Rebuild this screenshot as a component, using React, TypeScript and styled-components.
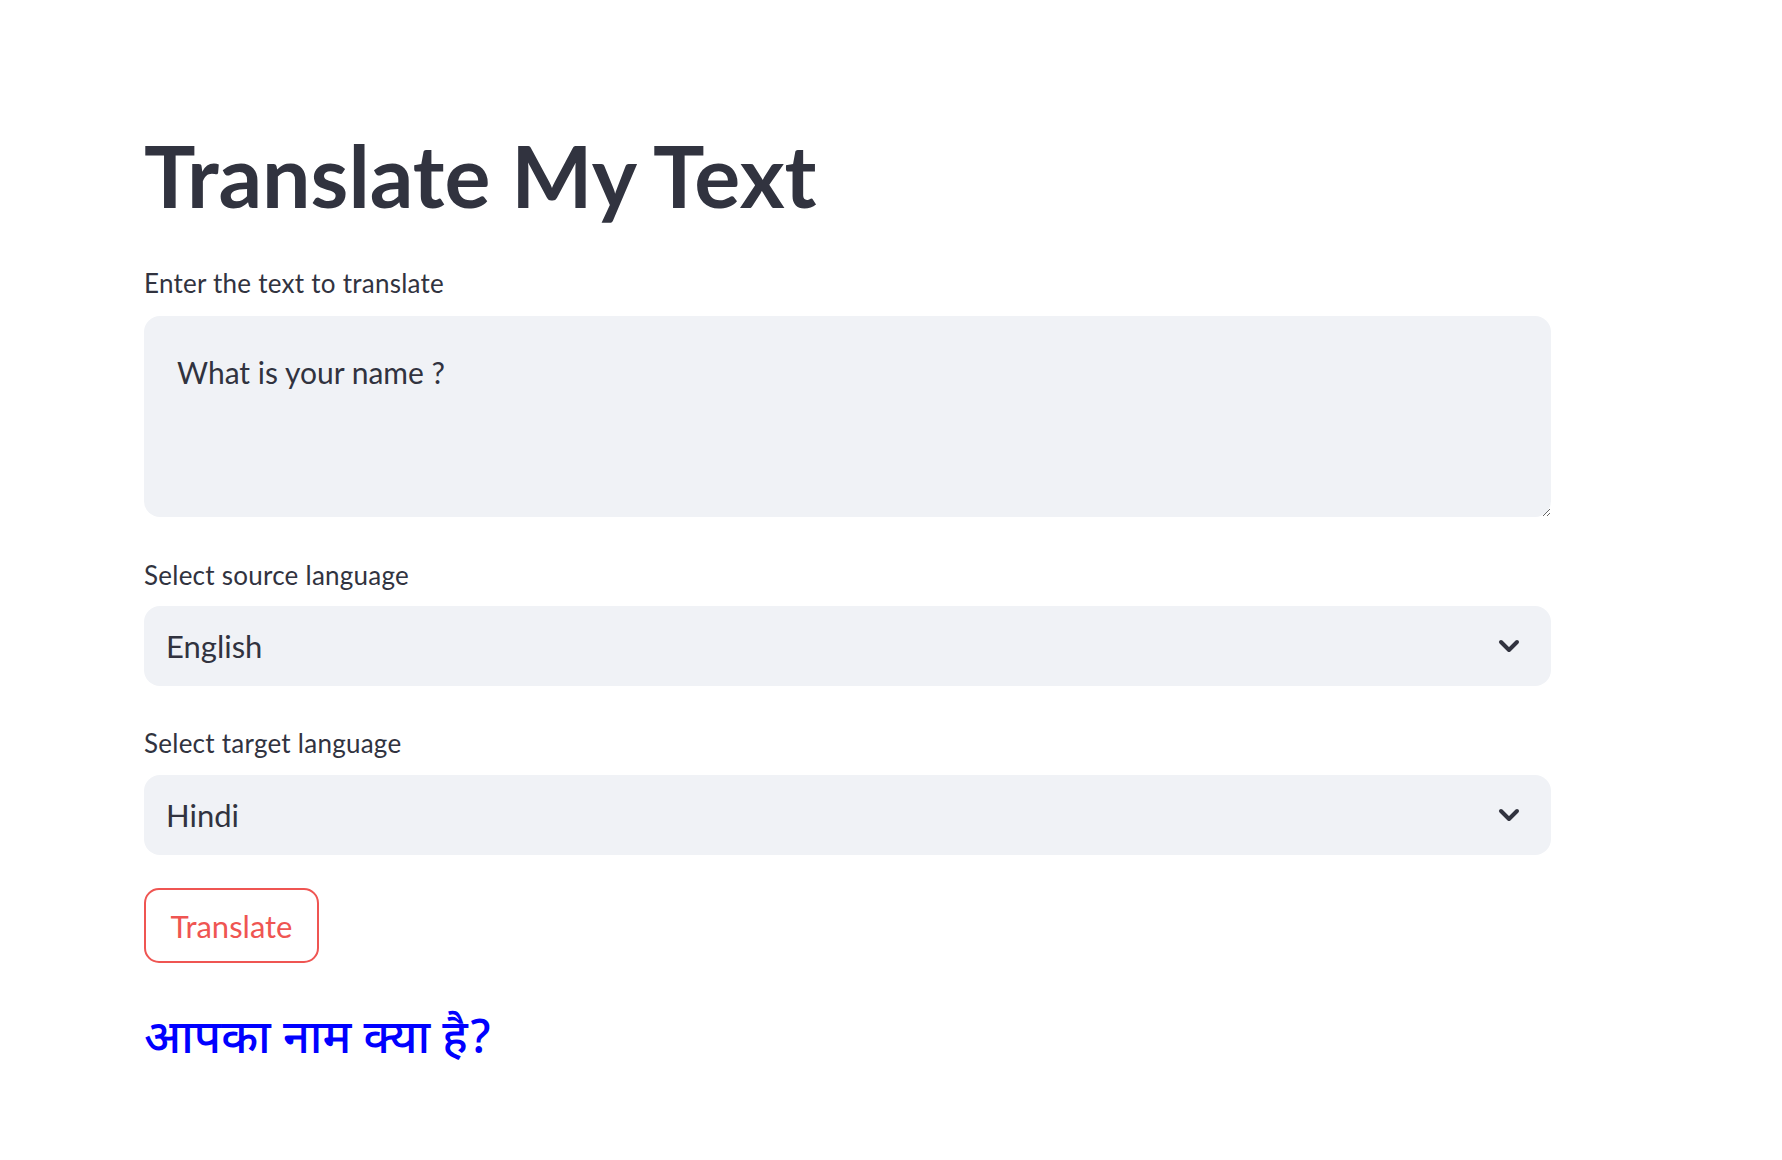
import React from "react";
import styled, { createGlobalStyle } from "styled-components";

const GlobalStyle = createGlobalStyle`
  html, body {
    margin: 0;
    padding: 0;
    background: #ffffff;
  }
  body {
    font-family: "Lato", "Noto Sans", sans-serif;
    color: #31333f;
  }
`;

const Page = styled.main`
  width: 1407px;
  padding: 123px 0 60px 144px;
  display: flex;
  flex-direction: column;
`;

const Title = styled.h1`
  margin: 0;
  font-family: "Lato", "Noto Sans", sans-serif;
  font-weight: 700;
  font-size: 86px;
  line-height: 1.2;
  color: #31333f;
`;

const Field = styled.div<{ $gap: number }>`
  display: flex;
  flex-direction: column;
  margin-top: ${(p) => p.$gap}px;
`;

const Label = styled.label<{ $space: number }>`
  font-size: 26px;
  line-height: 35px;
  letter-spacing: 0.25px;
  color: #31333f;
  margin-bottom: ${(p) => p.$space}px;
`;

const TextArea = styled.textarea`
  box-sizing: border-box;
  width: 100%;
  height: 201px;
  margin: 0;
  border: none;
  outline: none;
  border-radius: 16px;
  background: #f0f2f6;
  padding: 35px 33px;
  font-family: "Lato", "Noto Sans", sans-serif;
  font-size: 30px;
  line-height: 1.4;
  color: #31333f;
  resize: vertical;
`;

const Select = styled.div`
  box-sizing: border-box;
  height: 80px;
  border-radius: 16px;
  background: #f0f2f6;
  display: flex;
  align-items: center;
  justify-content: space-between;
  padding: 0 31px 0 22px;
  font-size: 31px;
  color: #31333f;
`;

const Chevron = () => (
  <svg width="22" height="14" viewBox="0 0 22 14" aria-hidden="true">
    <path
      d="M3 3 L11 11 L19 3"
      fill="none"
      stroke="#31333f"
      strokeWidth="4"
      strokeLinecap="round"
      strokeLinejoin="round"
    />
  </svg>
);

const Button = styled.button`
  align-self: flex-start;
  margin-top: 33px;
  box-sizing: border-box;
  width: 175px;
  height: 75px;
  border: 2px solid #ef5552;
  border-radius: 15px;
  background: #ffffff;
  color: #ef5552;
  font-family: "Lato", "Noto Sans", sans-serif;
  font-size: 31px;
  padding: 0;
  cursor: pointer;
`;

const Result = styled.p`
  margin: 48px 0 0;
  font-family: "Noto Sans Devanagari", "Noto Sans", "Lohit Devanagari", sans-serif;
  font-size: 47px;
  font-weight: 500;
  line-height: 1.3;
  color: #0000ff;
`;

export default function App() {
  return (
    <>
      <GlobalStyle />
      <Page>
        <Title>Translate My Text</Title>
        <Field $gap={40}>
          <Label $space={15}>Enter the text to translate</Label>
          <TextArea defaultValue="What is your name ?" />
        </Field>
        <Field $gap={41}>
          <Label $space={13}>Select source language</Label>
          <Select>
            <span>English</span>
            <Chevron />
          </Select>
        </Field>
        <Field $gap={40}>
          <Label $space={14}>Select target language</Label>
          <Select>
            <span>Hindi</span>
            <Chevron />
          </Select>
        </Field>
        <Button>Translate</Button>
        <Result>आपका नाम क्या है?</Result>
      </Page>
    </>
  );
}
